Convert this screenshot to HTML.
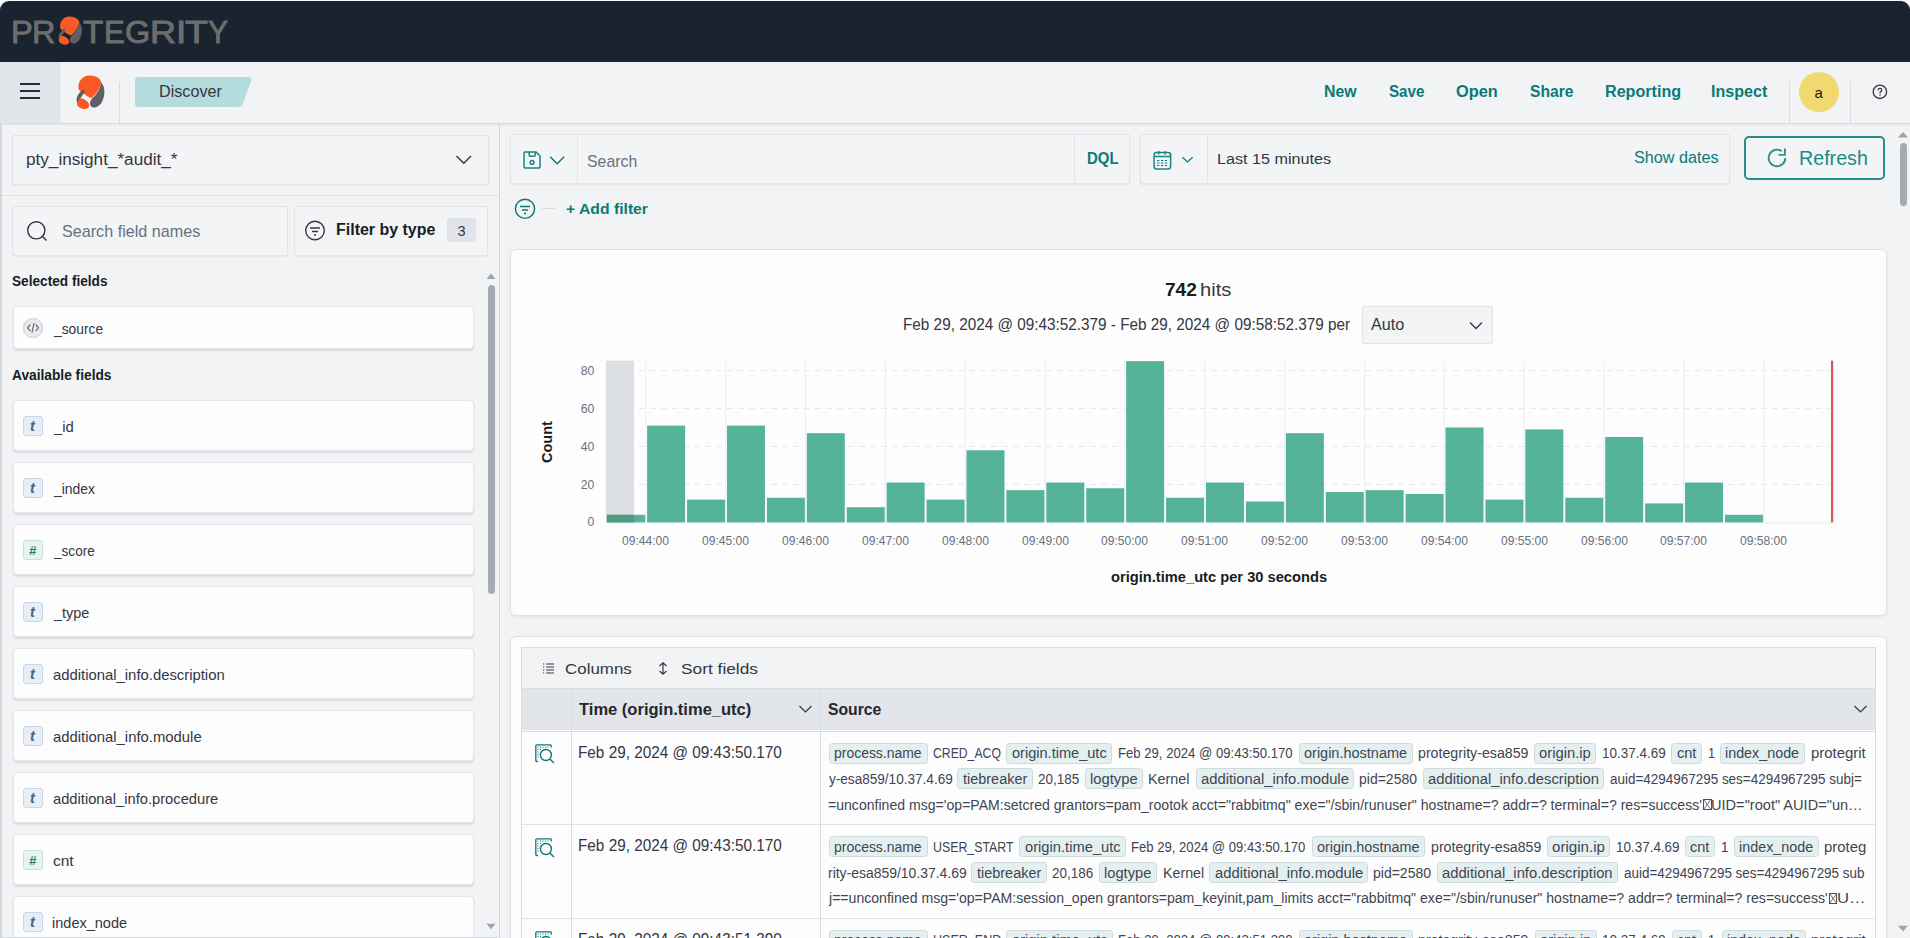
<!DOCTYPE html><html><head><meta charset="utf-8"><style>
html,body{margin:0;padding:0;width:1910px;height:938px;overflow:hidden;background:#f1f3f5}
body{position:relative;font-family:"Liberation Sans",sans-serif}
.t{position:absolute;white-space:pre;transform-origin:0 0;font-family:"Liberation Sans",sans-serif}
svg{overflow:visible}
</style></head><body>
<div style="position:absolute;left:0px;top:0px;width:1910px;height:938px;background:#f1f3f5"></div>
<div style="position:absolute;left:0px;top:0px;width:1910px;height:62px;background:#f7f8f9"></div>
<div style="position:absolute;left:0px;top:1.2px;width:1910px;height:60.8px;background:#1a2430;border-radius:9px 9px 0 0"></div>
<div class="t" style="left:10.72px;top:16.68px;font-size:31.8px;line-height:31.8px;color:#6e6d6e;font-weight:normal;font-style:normal;transform:scaleX(1.0266);-webkit-text-stroke:0.9px #6e6d6e;">P</div>
<div class="t" style="left:32.14px;top:16.68px;font-size:31.8px;line-height:31.8px;color:#6e6d6e;font-weight:normal;font-style:normal;transform:scaleX(1.0217);-webkit-text-stroke:0.9px #6e6d6e;">R</div>
<div class="t" style="left:83.07px;top:16.68px;font-size:31.8px;line-height:31.8px;color:#6e6d6e;font-weight:normal;font-style:normal;transform:scaleX(1.0390);-webkit-text-stroke:0.9px #6e6d6e;">T</div>
<div class="t" style="left:104.16px;top:16.68px;font-size:31.8px;line-height:31.8px;color:#6e6d6e;font-weight:normal;font-style:normal;transform:scaleX(0.9729);-webkit-text-stroke:0.9px #6e6d6e;">E</div>
<div class="t" style="left:124.78px;top:16.68px;font-size:31.8px;line-height:31.8px;color:#6e6d6e;font-weight:normal;font-style:normal;transform:scaleX(1.0194);-webkit-text-stroke:0.9px #6e6d6e;">G</div>
<div class="t" style="left:149.85px;top:16.68px;font-size:31.8px;line-height:31.8px;color:#6e6d6e;font-weight:normal;font-style:normal;transform:scaleX(1.1329);-webkit-text-stroke:0.9px #6e6d6e;">R</div>
<div class="t" style="left:175.67px;top:16.68px;font-size:31.8px;line-height:31.8px;color:#6e6d6e;font-weight:normal;font-style:normal;transform:scaleX(1.1709);-webkit-text-stroke:0.9px #6e6d6e;">I</div>
<div class="t" style="left:185.27px;top:16.68px;font-size:31.8px;line-height:31.8px;color:#6e6d6e;font-weight:normal;font-style:normal;transform:scaleX(1.1834);-webkit-text-stroke:0.9px #6e6d6e;">T</div>
<div class="t" style="left:207.54px;top:16.68px;font-size:31.8px;line-height:31.8px;color:#6e6d6e;font-weight:normal;font-style:normal;transform:scaleX(0.9389);-webkit-text-stroke:0.9px #6e6d6e;">Y</div>
<svg style="position:absolute;left:53.3px;top:12.1px" width="34" height="38" viewBox="0 0 34 38"><g transform="scale(0.84)"><path fill="#f95a24" d="M8.6 19C7.5 11 13 5.5 19.5 5.5C26 5.5 31.5 9 31.3 13C29.5 19.5 25.5 24.5 21.5 28C19 27.5 16.5 25.5 14.2 24C12.5 22.8 10 21.5 8.6 19Z"/><path fill="#5f6064" d="M31.3 12.5C35.5 17 35.5 27 31 33.5C28.5 36.8 25 38 22.5 37.3C20.5 36.5 19.5 34.5 20 32.5C20.5 30.5 21.5 29 22.5 28C26.5 24.5 30 19 31.3 12.5Z"/><path fill="#5f6064" d="M12.6 19.8C14.2 19.2 15.3 21 14.4 22.5C12 25.5 9.5 29.5 8 34C6.3 32.5 6 29 7.5 26C9 23.5 10.8 21 12.6 19.8Z"/><path fill="#f95a24" d="M10.8 28.3C13.5 28.5 17.5 30.8 19 34C19.8 37 17.5 39.2 14.5 39.1C10.5 38.8 7 36.5 7 34C7.5 31 9 28.5 10.8 28.3Z"/></g></svg>
<div style="position:absolute;left:0px;top:62px;width:1910px;height:61px;background:#f1f3f5"></div>
<div style="position:absolute;left:0px;top:123px;width:1910px;height:1px;background:#d6dbe0"></div>
<div style="position:absolute;left:0px;top:124px;width:1910px;height:2px;background:linear-gradient(#e3e6ea,#f1f3f5)"></div>
<div style="position:absolute;left:0px;top:62px;width:60px;height:61px;background:#e1e4e8;border-right:1px solid #e9ecef"></div>
<div style="position:absolute;left:20px;top:83px;width:20px;height:2.2px;background:#1f2e3e"></div>
<div style="position:absolute;left:20px;top:90px;width:20px;height:2.2px;background:#1f2e3e"></div>
<div style="position:absolute;left:20px;top:97px;width:20px;height:2.2px;background:#1f2e3e"></div>
<svg style="position:absolute;left:70px;top:70px" width="41" height="46" viewBox="0 0 41 46"><g transform="scale(1.0)"><path fill="#f95a24" d="M8.6 19C7.5 11 13 5.5 19.5 5.5C26 5.5 31.5 9 31.3 13C29.5 19.5 25.5 24.5 21.5 28C19 27.5 16.5 25.5 14.2 24C12.5 22.8 10 21.5 8.6 19Z"/><path fill="#5f6064" d="M31.3 12.5C35.5 17 35.5 27 31 33.5C28.5 36.8 25 38 22.5 37.3C20.5 36.5 19.5 34.5 20 32.5C20.5 30.5 21.5 29 22.5 28C26.5 24.5 30 19 31.3 12.5Z"/><path fill="#5f6064" d="M12.6 19.8C14.2 19.2 15.3 21 14.4 22.5C12 25.5 9.5 29.5 8 34C6.3 32.5 6 29 7.5 26C9 23.5 10.8 21 12.6 19.8Z"/><path fill="#f95a24" d="M10.8 28.3C13.5 28.5 17.5 30.8 19 34C19.8 37 17.5 39.2 14.5 39.1C10.5 38.8 7 36.5 7 34C7.5 31 9 28.5 10.8 28.3Z"/></g></svg>
<div style="position:absolute;left:119px;top:82px;width:1px;height:41px;background:#d9dde2"></div>
<svg style="position:absolute;left:135px;top:77px" width="117" height="31" viewBox="0 0 117 31"><path fill="#b4dcdc" d="M3 0H114C116 0 117 1.5 116.3 3.5L107.5 27.5C106.8 29.3 105.5 30 103.5 30H3C1.3 30 0 28.7 0 27V3C0 1.3 1.3 0 3 0Z"/></svg>
<div class="t" style="left:159.37px;top:82.93px;font-size:16.5px;line-height:16.5px;color:#343741;font-weight:normal;font-style:normal;transform:scaleX(0.9797);">Discover</div>
<div class="t" style="left:1323.66px;top:84.26px;font-size:16px;line-height:16px;color:#0b7a75;font-weight:bold;font-style:normal;transform:scaleX(0.9883);">New</div>
<div class="t" style="left:1389.38px;top:84.26px;font-size:16px;line-height:16px;color:#0b7a75;font-weight:bold;font-style:normal;transform:scaleX(0.9486);">Save</div>
<div class="t" style="left:1456.33px;top:84.26px;font-size:16px;line-height:16px;color:#0b7a75;font-weight:bold;font-style:normal;transform:scaleX(1.0192);">Open</div>
<div class="t" style="left:1529.56px;top:84.26px;font-size:16px;line-height:16px;color:#0b7a75;font-weight:bold;font-style:normal;transform:scaleX(0.9776);">Share</div>
<div class="t" style="left:1604.94px;top:84.26px;font-size:16px;line-height:16px;color:#0b7a75;font-weight:bold;font-style:normal;transform:scaleX(1.0078);">Reporting</div>
<div class="t" style="left:1710.94px;top:84.26px;font-size:16px;line-height:16px;color:#0b7a75;font-weight:bold;font-style:normal;transform:scaleX(1.0042);">Inspect</div>
<div style="position:absolute;left:1788.5px;top:82px;width:1px;height:41px;background:#d9dde2"></div>
<div style="position:absolute;left:1849.5px;top:82px;width:1px;height:41px;background:#d9dde2"></div>
<div style="position:absolute;left:1799px;top:72px;width:40px;height:40px;background:#f1d86f;border-radius:50%"></div>
<div class="t" style="left:1814.51px;top:85.20px;font-size:15px;line-height:15px;color:#1a1c21;font-weight:normal;font-style:normal;">a</div>
<svg style="position:absolute;left:1871px;top:83px" width="18" height="18" viewBox="0 0 18 18"><circle cx="8.9" cy="8.8" r="6.7" fill="none" stroke="#343741" stroke-width="1.3"/><path d="M7.1 7.3C7.1 6.2 7.9 5.4 8.95 5.4C10.05 5.4 10.8 6.2 10.8 7.1C10.8 8.2 9.5 8.5 9.05 9.4V10.2" fill="none" stroke="#343741" stroke-width="1.25"/><circle cx="9.05" cy="12" r="0.8" fill="#343741"/></svg>
<div style="position:absolute;left:0px;top:124px;width:1.5px;height:814px;background:#d3d7dc"></div>
<div style="position:absolute;left:498.6px;top:124px;width:1.2px;height:814px;background:#d3d7dc"></div>
<div style="position:absolute;left:1.5px;top:195px;width:497px;height:1px;background:#dfe2e6"></div>
<div style="position:absolute;left:12px;top:135px;width:476.5px;height:49.5px;background:#f2f4f6;border:1px solid #e1e5e9;box-sizing:border-box;border-radius:2px;box-shadow:0 1px 1px rgba(0,0,0,.05)"></div>
<div class="t" style="left:25.97px;top:152.03px;font-size:15.8px;line-height:15.8px;color:#343741;font-weight:normal;font-style:normal;transform:scaleX(1.0846);">pty_insight_*audit_*</div>
<svg style="position:absolute;left:455px;top:154px" width="18" height="12" viewBox="0 0 18 12"><path d="M1.5 2L8.8 9.3L16 2" fill="none" stroke="#343741" stroke-width="1.4"/></svg>
<div style="position:absolute;left:12px;top:206px;width:276px;height:50px;background:#f2f4f6;border:1px solid #e1e5e9;box-sizing:border-box;border-radius:2px;box-shadow:0 1px 1px rgba(0,0,0,.05)"></div>
<svg style="position:absolute;left:26px;top:220px" width="24" height="24" viewBox="0 0 24 24"><circle cx="10.3" cy="10.3" r="8.6" fill="none" stroke="#343741" stroke-width="1.4"/><path d="M16.3 16.3L20.5 20.5" stroke="#343741" stroke-width="1.5"/></svg>
<div class="t" style="left:62.27px;top:223.29px;font-size:16.2px;line-height:16.2px;color:#69707d;font-weight:normal;font-style:normal;transform:scaleX(0.9974);">Search field names</div>
<div style="position:absolute;left:294px;top:206px;width:194px;height:50px;background:#f2f4f6;border:1px solid #e1e5e9;box-sizing:border-box;border-radius:2px;box-shadow:0 1px 1px rgba(0,0,0,.05)"></div>
<svg style="position:absolute;left:303px;top:219px" width="24" height="24" viewBox="0 0 24 24"><circle cx="12" cy="11.5" r="9.3" fill="none" stroke="#343741" stroke-width="1.4"/><path d="M7 9H17M9 12.5H15M11 16H13" stroke="#343741" stroke-width="1.4"/></svg>
<div class="t" style="left:335.95px;top:222.46px;font-size:16px;line-height:16px;color:#1a1c21;font-weight:bold;font-style:normal;transform:scaleX(0.9981);">Filter by type</div>
<div style="position:absolute;left:447px;top:218.4px;width:29px;height:24px;background:#e0e3e7;border-radius:3px"></div>
<div class="t" style="left:457.51px;top:223.73px;font-size:14.5px;line-height:14.5px;color:#343741;font-weight:normal;font-style:normal;">3</div>
<div class="t" style="left:12.02px;top:273.73px;font-size:14.5px;line-height:14.5px;color:#1a1c21;font-weight:bold;font-style:normal;transform:scaleX(0.9408);">Selected fields</div>
<div class="t" style="left:12.07px;top:367.63px;font-size:14.5px;line-height:14.5px;color:#1a1c21;font-weight:bold;font-style:normal;transform:scaleX(0.9471);">Available fields</div>
<div style="position:absolute;left:12.6px;top:305.9px;width:461.8px;height:43.2px;background:#fdfdfe;border:1px solid #e4e7eb;box-sizing:border-box;border-radius:4px;box-shadow:0 1.5px 2px rgba(60,66,80,.12)"></div>
<div style="position:absolute;left:23.2px;top:318.2px;width:19.5px;height:19.5px;background:#e9ebee;border:1px solid #c9cdd3;box-sizing:border-box;border-radius:50%"></div>
<svg style="position:absolute;left:23.2px;top:318.2px" width="20" height="20" viewBox="0 0 20 20"><path d="M7.3 6.5L4.6 9.8L7.3 13.1M12.7 6.5L15.4 9.8L12.7 13.1M11 5.2L9 14.6" fill="none" stroke="#69707d" stroke-width="1.3"/></svg>
<div class="t" style="left:53.52px;top:320.50px;font-size:15.0px;line-height:15.0px;color:#343741;font-weight:normal;font-style:normal;transform:scaleX(0.9200);">_source</div>
<div style="position:absolute;left:12.6px;top:400.3px;width:461.8px;height:51px;background:#fdfdfe;border:1px solid #e4e7eb;box-sizing:border-box;border-radius:4px;box-shadow:0 1.5px 2px rgba(60,66,80,.12)"></div>
<div style="position:absolute;left:23px;top:416.40000000000003px;width:19.7px;height:19.4px;background:#e6eff7;border:1px solid #c6d6e6;box-sizing:border-box;border-radius:3px"></div>
<div class="t" style="left:29.93px;top:418.73px;font-size:14.5px;line-height:14.5px;color:#4a6382;font-weight:bold;font-style:italic;">t</div>
<div class="t" style="left:53.54px;top:418.60px;font-size:15.0px;line-height:15.0px;color:#343741;font-weight:normal;font-style:normal;transform:scaleX(0.9902);">_id</div>
<div style="position:absolute;left:12.6px;top:462.3px;width:461.8px;height:51px;background:#fdfdfe;border:1px solid #e4e7eb;box-sizing:border-box;border-radius:4px;box-shadow:0 1.5px 2px rgba(60,66,80,.12)"></div>
<div style="position:absolute;left:23px;top:478.40000000000003px;width:19.7px;height:19.4px;background:#e6eff7;border:1px solid #c6d6e6;box-sizing:border-box;border-radius:3px"></div>
<div class="t" style="left:29.93px;top:480.73px;font-size:14.5px;line-height:14.5px;color:#4a6382;font-weight:bold;font-style:italic;">t</div>
<div class="t" style="left:53.52px;top:480.60px;font-size:15.0px;line-height:15.0px;color:#343741;font-weight:normal;font-style:normal;transform:scaleX(0.9279);">_index</div>
<div style="position:absolute;left:12.6px;top:524.3px;width:461.8px;height:51px;background:#fdfdfe;border:1px solid #e4e7eb;box-sizing:border-box;border-radius:4px;box-shadow:0 1.5px 2px rgba(60,66,80,.12)"></div>
<div style="position:absolute;left:23px;top:540.4px;width:19.7px;height:19.4px;background:#e4f4ee;border:1px solid #c4e2d6;box-sizing:border-box;border-radius:3px"></div>
<div class="t" style="left:29.09px;top:543.60px;font-size:13px;line-height:13px;color:#387765;font-weight:bold;font-style:italic;">#</div>
<div class="t" style="left:53.52px;top:542.60px;font-size:15.0px;line-height:15.0px;color:#343741;font-weight:normal;font-style:normal;transform:scaleX(0.9059);">_score</div>
<div style="position:absolute;left:12.6px;top:586.3px;width:461.8px;height:51px;background:#fdfdfe;border:1px solid #e4e7eb;box-sizing:border-box;border-radius:4px;box-shadow:0 1.5px 2px rgba(60,66,80,.12)"></div>
<div style="position:absolute;left:23px;top:602.4px;width:19.7px;height:19.4px;background:#e6eff7;border:1px solid #c6d6e6;box-sizing:border-box;border-radius:3px"></div>
<div class="t" style="left:29.93px;top:604.73px;font-size:14.5px;line-height:14.5px;color:#4a6382;font-weight:bold;font-style:italic;">t</div>
<div class="t" style="left:53.53px;top:604.60px;font-size:15.0px;line-height:15.0px;color:#343741;font-weight:normal;font-style:normal;transform:scaleX(0.9650);">_type</div>
<div style="position:absolute;left:12.6px;top:648.3px;width:461.8px;height:51px;background:#fdfdfe;border:1px solid #e4e7eb;box-sizing:border-box;border-radius:4px;box-shadow:0 1.5px 2px rgba(60,66,80,.12)"></div>
<div style="position:absolute;left:23px;top:664.4px;width:19.7px;height:19.4px;background:#e6eff7;border:1px solid #c6d6e6;box-sizing:border-box;border-radius:3px"></div>
<div class="t" style="left:29.93px;top:666.73px;font-size:14.5px;line-height:14.5px;color:#4a6382;font-weight:bold;font-style:italic;">t</div>
<div class="t" style="left:52.68px;top:666.60px;font-size:15.0px;line-height:15.0px;color:#343741;font-weight:normal;font-style:normal;transform:scaleX(0.9898);">additional_info.description</div>
<div style="position:absolute;left:12.6px;top:710.3px;width:461.8px;height:51px;background:#fdfdfe;border:1px solid #e4e7eb;box-sizing:border-box;border-radius:4px;box-shadow:0 1.5px 2px rgba(60,66,80,.12)"></div>
<div style="position:absolute;left:23px;top:726.4px;width:19.7px;height:19.4px;background:#e6eff7;border:1px solid #c6d6e6;box-sizing:border-box;border-radius:3px"></div>
<div class="t" style="left:29.93px;top:728.73px;font-size:14.5px;line-height:14.5px;color:#4a6382;font-weight:bold;font-style:italic;">t</div>
<div class="t" style="left:52.68px;top:728.60px;font-size:15.0px;line-height:15.0px;color:#343741;font-weight:normal;font-style:normal;transform:scaleX(0.9905);">additional_info.module</div>
<div style="position:absolute;left:12.6px;top:772.3px;width:461.8px;height:51px;background:#fdfdfe;border:1px solid #e4e7eb;box-sizing:border-box;border-radius:4px;box-shadow:0 1.5px 2px rgba(60,66,80,.12)"></div>
<div style="position:absolute;left:23px;top:788.4px;width:19.7px;height:19.4px;background:#e6eff7;border:1px solid #c6d6e6;box-sizing:border-box;border-radius:3px"></div>
<div class="t" style="left:29.93px;top:790.73px;font-size:14.5px;line-height:14.5px;color:#4a6382;font-weight:bold;font-style:italic;">t</div>
<div class="t" style="left:52.68px;top:790.60px;font-size:15.0px;line-height:15.0px;color:#343741;font-weight:normal;font-style:normal;transform:scaleX(0.9811);">additional_info.procedure</div>
<div style="position:absolute;left:12.6px;top:834.3px;width:461.8px;height:51px;background:#fdfdfe;border:1px solid #e4e7eb;box-sizing:border-box;border-radius:4px;box-shadow:0 1.5px 2px rgba(60,66,80,.12)"></div>
<div style="position:absolute;left:23px;top:850.4px;width:19.7px;height:19.4px;background:#e4f4ee;border:1px solid #c4e2d6;box-sizing:border-box;border-radius:3px"></div>
<div class="t" style="left:29.09px;top:853.60px;font-size:13px;line-height:13px;color:#387765;font-weight:bold;font-style:italic;">#</div>
<div class="t" style="left:52.65px;top:852.60px;font-size:15.0px;line-height:15.0px;color:#343741;font-weight:normal;font-style:normal;transform:scaleX(1.0324);">cnt</div>
<div style="position:absolute;left:12.6px;top:896.3px;width:461.8px;height:51px;background:#fdfdfe;border:1px solid #e4e7eb;box-sizing:border-box;border-radius:4px;box-shadow:0 1.5px 2px rgba(60,66,80,.12)"></div>
<div style="position:absolute;left:23px;top:912.4px;width:19.7px;height:19.4px;background:#e6eff7;border:1px solid #c6d6e6;box-sizing:border-box;border-radius:3px"></div>
<div class="t" style="left:29.93px;top:914.73px;font-size:14.5px;line-height:14.5px;color:#4a6382;font-weight:bold;font-style:italic;">t</div>
<div class="t" style="left:52.34px;top:914.60px;font-size:15.0px;line-height:15.0px;color:#343741;font-weight:normal;font-style:normal;transform:scaleX(0.9682);">index_node</div>
<svg style="position:absolute;left:486px;top:273px" width="10" height="7" viewBox="0 0 10 7"><path d="M0.5 6L5 0.5L9.5 6Z" fill="#9ea3a9"/></svg>
<div style="position:absolute;left:488.2px;top:285px;width:6.8px;height:309px;background:#a5abb3;border-radius:4px"></div>
<svg style="position:absolute;left:486px;top:923px" width="10" height="7" viewBox="0 0 10 7"><path d="M0.5 0.8L5 6.3L9.5 0.8Z" fill="#9ea3a9"/></svg>
<div style="position:absolute;left:510px;top:134px;width:619.5px;height:49.6px;background:#f2f4f6;border:1px solid #e1e5e9;box-sizing:border-box;border-radius:2px;box-shadow:0 1px 2px rgba(0,0,0,.06)"></div>
<div style="position:absolute;left:577px;top:135.5px;width:1px;height:47px;background:#e1e5e9"></div>
<div style="position:absolute;left:1074px;top:135.5px;width:1px;height:47px;background:#e1e5e9"></div>
<svg style="position:absolute;left:521px;top:150px" width="22" height="21" viewBox="0 0 22 21"><path d="M3.8 1.95H15L19.05 6V16.6A1.5 1.5 0 0 1 17.55 18.05H4.55A1.5 1.5 0 0 1 3.05 16.6V2.7A0.75 0.75 0 0 1 3.8 1.95Z" fill="none" stroke="#1b8580" stroke-width="1.5"/><path d="M8.2 1.95V5.3A1 1 0 0 0 9.2 6.3H13.2A1 1 0 0 0 14.2 5.3V1.95" fill="none" stroke="#1b8580" stroke-width="1.5"/><circle cx="11.1" cy="12.4" r="1.9" fill="none" stroke="#1b8580" stroke-width="1.4"/></svg>
<svg style="position:absolute;left:549px;top:154.8px" width="17" height="11" viewBox="0 0 17 11"><path d="M1.2 1.8L8.2 8.8L15.2 1.8" fill="none" stroke="#0b7a75" stroke-width="1.5"/></svg>
<div class="t" style="left:587.29px;top:153.29px;font-size:16.2px;line-height:16.2px;color:#69707d;font-weight:normal;font-style:normal;transform:scaleX(0.9787);">Search</div>
<div class="t" style="left:1086.71px;top:151.23px;font-size:15.8px;line-height:15.8px;color:#0b7a75;font-weight:bold;font-style:normal;transform:scaleX(0.9454);">DQL</div>
<div style="position:absolute;left:1140px;top:134px;width:589.6px;height:49.6px;background:#f2f4f6;border:1px solid #e1e5e9;box-sizing:border-box;border-radius:2px;box-shadow:0 1px 2px rgba(0,0,0,.06)"></div>
<div style="position:absolute;left:1207px;top:135.5px;width:1px;height:47px;background:#e1e5e9"></div>
<svg style="position:absolute;left:1151px;top:149px" width="22" height="23" viewBox="0 0 22 23"><rect x="3.05" y="3.6" width="16.6" height="16.3" rx="2.6" fill="none" stroke="#1b8580" stroke-width="1.5"/><path d="M3.05 7.4H19.65M7.6 2V5.4M14 2V5.4" stroke="#1b8580" stroke-width="1.5"/><path d="M6.1 11h2.3v1.1h-2.3zM10 11h2.3v1.1h-2.3zM13.8 11h2.3v1.1h-2.3zM6.1 13.5h2.3v1.1h-2.3zM10 13.5h2.3v1.1h-2.3zM13.8 13.5h2.3v1.1h-2.3zM6.1 15.9h2.3v1.1h-2.3zM10 15.9h2.3v1.1h-2.3zM13.8 15.9h2.3v1.1h-2.3z" fill="#0b7a75"/></svg>
<svg style="position:absolute;left:1180.5px;top:154px" width="14" height="10" viewBox="0 0 14 10"><path d="M1.3 3.2L6.5 8L11.7 3.2" fill="none" stroke="#0b7a75" stroke-width="1.2"/></svg>
<div class="t" style="left:1217.47px;top:150.85px;font-size:15.3px;line-height:15.3px;color:#343741;font-weight:normal;font-style:normal;transform:scaleX(1.0564);">Last 15 minutes</div>
<div class="t" style="left:1634.27px;top:150.46px;font-size:16px;line-height:16px;color:#0b7a75;font-weight:normal;font-style:normal;transform:scaleX(1.0107);">Show dates</div>
<div style="position:absolute;left:1744px;top:136px;width:141.4px;height:44px;border:2px solid #2a8f88;box-sizing:border-box;border-radius:5px;background:#f2f4f6"></div>
<svg style="position:absolute;left:1766px;top:147px" width="22" height="22" viewBox="0 0 22 22"><path d="M15.7 4.1A8.3 8.3 0 1 0 19.3 10.9" fill="none" stroke="#2f9189" stroke-width="1.9"/><path d="M18.9 1.6V7.9H12.5" fill="none" stroke="#2f9189" stroke-width="1.9"/></svg>
<div class="t" style="left:1799.39px;top:148.20px;font-size:20.2px;line-height:20.2px;color:#1a8a83;font-weight:normal;font-style:normal;transform:scaleX(0.9739);">Refresh</div>
<svg style="position:absolute;left:1897px;top:131px" width="12" height="7" viewBox="0 0 12 7"><path d="M1 6.5L6 1L11 6.5Z" fill="#9ea3a9"/></svg>
<div style="position:absolute;left:1900px;top:143px;width:7px;height:62.5px;background:#a5abb3;border-radius:4px"></div>
<svg style="position:absolute;left:1897px;top:925px" width="12" height="7" viewBox="0 0 12 7"><path d="M1 0.8L6 6.3L11 0.8Z" fill="#9ea3a9"/></svg>
<svg style="position:absolute;left:514px;top:198px" width="22" height="22" viewBox="0 0 22 22"><circle cx="11" cy="10.8" r="9.6" fill="none" stroke="#0b7a75" stroke-width="1.4"/><path d="M6 8.5H16M8 12H14M10 15.5H12" stroke="#0b7a75" stroke-width="1.4"/></svg>
<div style="position:absolute;left:542px;top:207.8px;width:13px;height:1.2px;background:#d9dde2"></div>
<div class="t" style="left:565.94px;top:201.38px;font-size:15.5px;line-height:15.5px;color:#0b7a75;font-weight:bold;font-style:normal;transform:scaleX(1.0146);">+ Add filter</div>
<div style="position:absolute;left:510px;top:249px;width:1376.6px;height:366.8px;background:#fdfdfe;border:1px solid #dde1e6;box-sizing:border-box;border-radius:6px;box-shadow:0 1px 3px rgba(0,0,0,.07)"></div>
<div class="t" style="left:1165.20px;top:279.92px;font-size:19px;line-height:19px;color:#1a1c21;font-weight:bold;font-style:normal;transform:scaleX(1.0049);">742</div>
<div class="t" style="left:1200.41px;top:279.92px;font-size:19px;line-height:19px;color:#343741;font-weight:normal;font-style:normal;transform:scaleX(1.0592);">hits</div>
<div class="t" style="left:902.95px;top:317.16px;font-size:16px;line-height:16px;color:#343741;font-weight:normal;font-style:normal;transform:scaleX(0.9564);">Feb 29, 2024 @ 09:43:52.379 - Feb 29, 2024 @ 09:58:52.379 per</div>
<div style="position:absolute;left:1361.5px;top:305.5px;width:131.9px;height:38.7px;background:#f2f4f6;border:1px solid #dfe3e8;box-sizing:border-box;border-radius:2px"></div>
<div class="t" style="left:1371.37px;top:317.46px;font-size:16px;line-height:16px;color:#343741;font-weight:normal;font-style:normal;transform:scaleX(1.0117);">Auto</div>
<svg style="position:absolute;left:1468px;top:320px" width="16" height="11" viewBox="0 0 16 11"><path d="M2 2.5L8 8.5L14 2.5" fill="none" stroke="#343741" stroke-width="1.3"/></svg>
<svg style="position:absolute;left:520px;top:350px" width="1360" height="250" viewBox="0 0 1360 250"><line x1="125.90" y1="10.699999999999989" x2="125.90" y2="172.39999999999998" stroke="#ebedf0" stroke-width="1"/><line x1="205.74" y1="10.699999999999989" x2="205.74" y2="172.39999999999998" stroke="#ebedf0" stroke-width="1"/><line x1="285.58" y1="10.699999999999989" x2="285.58" y2="172.39999999999998" stroke="#ebedf0" stroke-width="1"/><line x1="365.42" y1="10.699999999999989" x2="365.42" y2="172.39999999999998" stroke="#ebedf0" stroke-width="1"/><line x1="445.26" y1="10.699999999999989" x2="445.26" y2="172.39999999999998" stroke="#ebedf0" stroke-width="1"/><line x1="525.10" y1="10.699999999999989" x2="525.10" y2="172.39999999999998" stroke="#ebedf0" stroke-width="1"/><line x1="604.94" y1="10.699999999999989" x2="604.94" y2="172.39999999999998" stroke="#ebedf0" stroke-width="1"/><line x1="684.78" y1="10.699999999999989" x2="684.78" y2="172.39999999999998" stroke="#ebedf0" stroke-width="1"/><line x1="764.62" y1="10.699999999999989" x2="764.62" y2="172.39999999999998" stroke="#ebedf0" stroke-width="1"/><line x1="844.46" y1="10.699999999999989" x2="844.46" y2="172.39999999999998" stroke="#ebedf0" stroke-width="1"/><line x1="924.30" y1="10.699999999999989" x2="924.30" y2="172.39999999999998" stroke="#ebedf0" stroke-width="1"/><line x1="1004.14" y1="10.699999999999989" x2="1004.14" y2="172.39999999999998" stroke="#ebedf0" stroke-width="1"/><line x1="1083.98" y1="10.699999999999989" x2="1083.98" y2="172.39999999999998" stroke="#ebedf0" stroke-width="1"/><line x1="1163.82" y1="10.699999999999989" x2="1163.82" y2="172.39999999999998" stroke="#ebedf0" stroke-width="1"/><line x1="1243.66" y1="10.699999999999989" x2="1243.66" y2="172.39999999999998" stroke="#ebedf0" stroke-width="1"/><line x1="86" y1="134.45" x2="1312" y2="134.45" stroke="#e6e9ec" stroke-width="1" stroke-dasharray="6 5"/><line x1="86" y1="96.50" x2="1312" y2="96.50" stroke="#e6e9ec" stroke-width="1" stroke-dasharray="6 5"/><line x1="86" y1="58.55" x2="1312" y2="58.55" stroke="#e6e9ec" stroke-width="1" stroke-dasharray="6 5"/><line x1="86" y1="20.60" x2="1312" y2="20.60" stroke="#e6e9ec" stroke-width="1" stroke-dasharray="6 5"/><line x1="86" y1="172.89999999999998" x2="1312" y2="172.89999999999998" stroke="#eceef1" stroke-width="1"/><rect x="86" y="10.699999999999989" width="28" height="161.7" fill="#dcdfe3"/><rect x="87.20" y="164.81" width="38" height="7.59" fill="#54b399"/><rect x="127.12" y="75.63" width="38" height="96.77" fill="#54b399"/><rect x="167.04" y="149.63" width="38" height="22.77" fill="#54b399"/><rect x="206.96" y="75.63" width="38" height="96.77" fill="#54b399"/><rect x="246.88" y="147.73" width="38" height="24.67" fill="#54b399"/><rect x="286.80" y="83.22" width="38" height="89.18" fill="#54b399"/><rect x="326.72" y="157.22" width="38" height="15.18" fill="#54b399"/><rect x="366.64" y="132.55" width="38" height="39.85" fill="#54b399"/><rect x="406.56" y="149.63" width="38" height="22.77" fill="#54b399"/><rect x="446.48" y="100.29" width="38" height="72.11" fill="#54b399"/><rect x="486.40" y="140.14" width="38" height="32.26" fill="#54b399"/><rect x="526.32" y="132.55" width="38" height="39.85" fill="#54b399"/><rect x="566.24" y="138.25" width="38" height="34.16" fill="#54b399"/><rect x="606.16" y="11.11" width="38" height="161.29" fill="#54b399"/><rect x="646.08" y="147.73" width="38" height="24.67" fill="#54b399"/><rect x="686.00" y="132.55" width="38" height="39.85" fill="#54b399"/><rect x="725.92" y="151.53" width="38" height="20.87" fill="#54b399"/><rect x="765.84" y="83.22" width="38" height="89.18" fill="#54b399"/><rect x="805.76" y="142.04" width="38" height="30.36" fill="#54b399"/><rect x="845.68" y="140.14" width="38" height="32.26" fill="#54b399"/><rect x="885.60" y="143.94" width="38" height="28.46" fill="#54b399"/><rect x="925.52" y="77.52" width="38" height="94.88" fill="#54b399"/><rect x="965.44" y="149.63" width="38" height="22.77" fill="#54b399"/><rect x="1005.36" y="79.42" width="38" height="92.98" fill="#54b399"/><rect x="1045.28" y="147.73" width="38" height="24.67" fill="#54b399"/><rect x="1085.20" y="87.01" width="38" height="85.39" fill="#54b399"/><rect x="1125.12" y="153.42" width="38" height="18.98" fill="#54b399"/><rect x="1165.04" y="132.55" width="38" height="39.85" fill="#54b399"/><rect x="1204.96" y="164.81" width="38" height="7.59" fill="#54b399"/><rect x="86.79999999999995" y="164.81" width="27.2" height="7.59" fill="#4f9c85"/><rect x="1311" y="10.699999999999989" width="2.2" height="161.7" fill="#d6574f"/></svg>
<div class="t" style="left:587.48px;top:516.47px;font-size:12.2px;line-height:12.2px;color:#69707d;font-weight:normal;font-style:normal;">0</div>
<div class="t" style="left:580.70px;top:478.52px;font-size:12.2px;line-height:12.2px;color:#69707d;font-weight:normal;font-style:normal;">20</div>
<div class="t" style="left:580.70px;top:440.57px;font-size:12.2px;line-height:12.2px;color:#69707d;font-weight:normal;font-style:normal;">40</div>
<div class="t" style="left:580.70px;top:402.62px;font-size:12.2px;line-height:12.2px;color:#69707d;font-weight:normal;font-style:normal;">60</div>
<div class="t" style="left:580.70px;top:364.67px;font-size:12.2px;line-height:12.2px;color:#69707d;font-weight:normal;font-style:normal;">80</div>
<div class="t" style="left:540.00px;top:462.50px;font-size:14.5px;line-height:14.5px;color:#1a1c21;font-weight:bold;transform-origin:0 0;transform:rotate(-90deg)">Count</div>
<div class="t" style="left:622.43px;top:535.26px;font-size:12.8px;line-height:12.8px;color:#69707d;font-weight:normal;font-style:normal;transform:scaleX(0.9420);">09:44:00</div>
<div class="t" style="left:702.27px;top:535.26px;font-size:12.8px;line-height:12.8px;color:#69707d;font-weight:normal;font-style:normal;transform:scaleX(0.9420);">09:45:00</div>
<div class="t" style="left:782.11px;top:535.26px;font-size:12.8px;line-height:12.8px;color:#69707d;font-weight:normal;font-style:normal;transform:scaleX(0.9420);">09:46:00</div>
<div class="t" style="left:861.95px;top:535.26px;font-size:12.8px;line-height:12.8px;color:#69707d;font-weight:normal;font-style:normal;transform:scaleX(0.9420);">09:47:00</div>
<div class="t" style="left:941.79px;top:535.26px;font-size:12.8px;line-height:12.8px;color:#69707d;font-weight:normal;font-style:normal;transform:scaleX(0.9420);">09:48:00</div>
<div class="t" style="left:1021.63px;top:535.26px;font-size:12.8px;line-height:12.8px;color:#69707d;font-weight:normal;font-style:normal;transform:scaleX(0.9420);">09:49:00</div>
<div class="t" style="left:1101.47px;top:535.26px;font-size:12.8px;line-height:12.8px;color:#69707d;font-weight:normal;font-style:normal;transform:scaleX(0.9420);">09:50:00</div>
<div class="t" style="left:1181.31px;top:535.26px;font-size:12.8px;line-height:12.8px;color:#69707d;font-weight:normal;font-style:normal;transform:scaleX(0.9420);">09:51:00</div>
<div class="t" style="left:1261.15px;top:535.26px;font-size:12.8px;line-height:12.8px;color:#69707d;font-weight:normal;font-style:normal;transform:scaleX(0.9420);">09:52:00</div>
<div class="t" style="left:1340.99px;top:535.26px;font-size:12.8px;line-height:12.8px;color:#69707d;font-weight:normal;font-style:normal;transform:scaleX(0.9420);">09:53:00</div>
<div class="t" style="left:1420.83px;top:535.26px;font-size:12.8px;line-height:12.8px;color:#69707d;font-weight:normal;font-style:normal;transform:scaleX(0.9420);">09:54:00</div>
<div class="t" style="left:1500.67px;top:535.26px;font-size:12.8px;line-height:12.8px;color:#69707d;font-weight:normal;font-style:normal;transform:scaleX(0.9420);">09:55:00</div>
<div class="t" style="left:1580.51px;top:535.26px;font-size:12.8px;line-height:12.8px;color:#69707d;font-weight:normal;font-style:normal;transform:scaleX(0.9420);">09:56:00</div>
<div class="t" style="left:1660.35px;top:535.26px;font-size:12.8px;line-height:12.8px;color:#69707d;font-weight:normal;font-style:normal;transform:scaleX(0.9420);">09:57:00</div>
<div class="t" style="left:1740.19px;top:535.26px;font-size:12.8px;line-height:12.8px;color:#69707d;font-weight:normal;font-style:normal;transform:scaleX(0.9420);">09:58:00</div>
<div class="t" style="left:1111.43px;top:569.53px;font-size:14.5px;line-height:14.5px;color:#1a1c21;font-weight:bold;font-style:normal;transform:scaleX(1.0119);">origin.time_utc per 30 seconds</div>
<div style="position:absolute;left:510px;top:636px;width:1376.6px;height:320px;background:#fdfdfe;border:1px solid #dde1e6;box-sizing:border-box;border-radius:6px;box-shadow:0 1px 3px rgba(0,0,0,.07)"></div>
<div style="position:absolute;left:521px;top:647px;width:1355px;height:300px;background:#fdfdfe;border:1px solid #d9dde2;box-sizing:border-box"></div>
<div style="position:absolute;left:522px;top:648px;width:1353px;height:40px;background:#f1f3f5"></div>
<div style="position:absolute;left:522px;top:688.3px;width:1353px;height:42.2px;background:#e2e5e9"></div>
<div style="position:absolute;left:522px;top:688px;width:1353px;height:1px;background:#d9dde2"></div>
<div style="position:absolute;left:522px;top:730.5px;width:1353px;height:1px;background:#d9dde2"></div>
<div style="position:absolute;left:570.5px;top:688.3px;width:1px;height:250px;background:#d9dde2"></div>
<div style="position:absolute;left:820.3px;top:688.3px;width:1px;height:250px;background:#d9dde2"></div>
<div style="position:absolute;left:522px;top:824.3px;width:1353px;height:1px;background:#dfe2e6"></div>
<div style="position:absolute;left:522px;top:918.3px;width:1353px;height:1px;background:#dfe2e6"></div>
<svg style="position:absolute;left:541px;top:661px" width="16" height="15" viewBox="0 0 16 15"><path d="M2 3H3.2M2 6H3.2M2 9H3.2M2 12H3.2M5.2 3H13M5.2 6H13M5.2 9H13M5.2 12H13" stroke="#343741" stroke-width="1.2"/></svg>
<div class="t" style="left:565.25px;top:661.40px;font-size:15.0px;line-height:15.0px;color:#343741;font-weight:normal;font-style:normal;transform:scaleX(1.1278);">Columns</div>
<svg style="position:absolute;left:656px;top:661px" width="14" height="15" viewBox="0 0 14 15"><path d="M3.5 5L7 1.8L10.5 5M3.5 10L7 13.2L10.5 10M7 1.8V13.2" fill="none" stroke="#343741" stroke-width="1.2"/></svg>
<div class="t" style="left:681.02px;top:661.40px;font-size:15.0px;line-height:15.0px;color:#343741;font-weight:normal;font-style:normal;transform:scaleX(1.1546);">Sort fields</div>
<div class="t" style="left:579.22px;top:702.26px;font-size:16px;line-height:16px;color:#25282f;font-weight:bold;font-style:normal;transform:scaleX(1.0327);">Time (origin.time_utc)</div>
<svg style="position:absolute;left:798px;top:704px" width="15" height="10" viewBox="0 0 15 10"><path d="M1.5 2L7.5 8L13.5 2" fill="none" stroke="#343741" stroke-width="1.2"/></svg>
<div class="t" style="left:828.26px;top:702.26px;font-size:16px;line-height:16px;color:#25282f;font-weight:bold;font-style:normal;transform:scaleX(0.9822);">Source</div>
<svg style="position:absolute;left:1853px;top:704px" width="15" height="10" viewBox="0 0 15 10"><path d="M1.5 2L7.5 8L13.5 2" fill="none" stroke="#343741" stroke-width="1.2"/></svg>
<svg style="position:absolute;left:535px;top:744px" width="22" height="22" viewBox="0 0 22 22"><path d="M3 17.5H1.8C1.2 17.5 0.8 17.1 0.8 16.5V1.8C0.8 1.2 1.2 0.8 1.8 0.8H15.3C15.9 0.8 16.3 1.2 16.3 1.8V3.5" fill="none" stroke="#0b7a75" stroke-width="1.3"/><circle cx="10.9" cy="11" r="5.5" fill="none" stroke="#0b7a75" stroke-width="1.4"/><path d="M14.9 15L18.9 19" stroke="#0b7a75" stroke-width="1.4"/><rect x="2.5" y="2.6" width="1" height="1" fill="#0b7a75"/><rect x="5.0" y="2.6" width="1" height="1" fill="#0b7a75"/><rect x="7.5" y="2.6" width="1" height="1" fill="#0b7a75"/><rect x="10.0" y="2.6" width="1" height="1" fill="#0b7a75"/><rect x="12.5" y="2.6" width="1" height="1" fill="#0b7a75"/><rect x="2.5" y="5.0" width="1" height="1" fill="#0b7a75"/><rect x="2.5" y="7.5" width="1" height="1" fill="#0b7a75"/><rect x="2.5" y="10.0" width="1" height="1" fill="#0b7a75"/><rect x="2.5" y="12.5" width="1" height="1" fill="#0b7a75"/><rect x="5" y="5" width="1" height="1" fill="#0b7a75"/></svg>
<div class="t" style="left:578.14px;top:744.66px;font-size:16px;line-height:16px;color:#343741;font-weight:normal;font-style:normal;transform:scaleX(0.9572);">Feb 29, 2024 @ 09:43:50.170</div>
<div style="position:absolute;left:829.3px;top:742.5999999999999px;width:98.30000000000007px;height:21px;background:#e4eff0;border:1px solid #cfdadd;box-sizing:border-box;border-radius:3.5px"></div>
<div class="t" style="left:834.41px;top:745.18px;font-size:15.5px;line-height:15.5px;color:#3f4550;font-weight:normal;font-style:normal;transform:scaleX(0.8999);">process.name</div>
<div class="t" style="left:932.79px;top:745.18px;font-size:15.5px;line-height:15.5px;color:#3f4550;font-weight:normal;font-style:normal;transform:scaleX(0.7883);">CRED_ACQ</div>
<div style="position:absolute;left:1006.4px;top:742.5999999999999px;width:105.89999999999998px;height:21px;background:#e4eff0;border:1px solid #cfdadd;box-sizing:border-box;border-radius:3.5px"></div>
<div class="t" style="left:1011.79px;top:745.18px;font-size:15.5px;line-height:15.5px;color:#3f4550;font-weight:normal;font-style:normal;transform:scaleX(0.9394);">origin.time_utc</div>
<div class="t" style="left:1118.22px;top:745.18px;font-size:15.5px;line-height:15.5px;color:#3f4550;font-weight:normal;font-style:normal;transform:scaleX(0.8466);">Feb 29, 2024 @ 09:43:50.170</div>
<div style="position:absolute;left:1298.5px;top:742.5999999999999px;width:114.0px;height:21px;background:#e4eff0;border:1px solid #cfdadd;box-sizing:border-box;border-radius:3.5px"></div>
<div class="t" style="left:1303.89px;top:745.18px;font-size:15.5px;line-height:15.5px;color:#3f4550;font-weight:normal;font-style:normal;transform:scaleX(0.9344);">origin.hostname</div>
<div class="t" style="left:1417.89px;top:745.18px;font-size:15.5px;line-height:15.5px;color:#3f4550;font-weight:normal;font-style:normal;transform:scaleX(0.9159);">protegrity-esa859</div>
<div style="position:absolute;left:1533.7px;top:742.5999999999999px;width:62.799999999999955px;height:21px;background:#e4eff0;border:1px solid #cfdadd;box-sizing:border-box;border-radius:3.5px"></div>
<div class="t" style="left:1539.08px;top:745.18px;font-size:15.5px;line-height:15.5px;color:#3f4550;font-weight:normal;font-style:normal;transform:scaleX(0.9548);">origin.ip</div>
<div class="t" style="left:1601.97px;top:745.18px;font-size:15.5px;line-height:15.5px;color:#3f4550;font-weight:normal;font-style:normal;transform:scaleX(0.8704);">10.37.4.69</div>
<div style="position:absolute;left:1671.4px;top:742.5999999999999px;width:30.899999999999864px;height:21px;background:#e4eff0;border:1px solid #cfdadd;box-sizing:border-box;border-radius:3.5px"></div>
<div class="t" style="left:1676.79px;top:745.18px;font-size:15.5px;line-height:15.5px;color:#3f4550;font-weight:normal;font-style:normal;transform:scaleX(0.9389);">cnt</div>
<div class="t" style="left:1707.63px;top:745.18px;font-size:15.5px;line-height:15.5px;color:#3f4550;font-weight:normal;font-style:normal;transform:scaleX(0.8214);">1</div>
<div style="position:absolute;left:1720.4px;top:742.5999999999999px;width:84.69999999999982px;height:21px;background:#e4eff0;border:1px solid #cfdadd;box-sizing:border-box;border-radius:3.5px"></div>
<div class="t" style="left:1725.45px;top:745.18px;font-size:15.5px;line-height:15.5px;color:#3f4550;font-weight:normal;font-style:normal;transform:scaleX(0.9242);">index_node</div>
<div class="t" style="left:1810.74px;top:745.18px;font-size:15.5px;line-height:15.5px;color:#3f4550;font-weight:normal;font-style:normal;transform:scaleX(0.9629);">protegrit</div>
<div class="t" style="left:828.87px;top:770.98px;font-size:15.5px;line-height:15.5px;color:#3f4550;font-weight:normal;font-style:normal;transform:scaleX(0.8757);">y-esa859/10.37.4.69</div>
<div style="position:absolute;left:957.4px;top:768.3999999999999px;width:76.00000000000011px;height:21px;background:#e4eff0;border:1px solid #cfdadd;box-sizing:border-box;border-radius:3.5px"></div>
<div class="t" style="left:963.18px;top:770.98px;font-size:15.5px;line-height:15.5px;color:#3f4550;font-weight:normal;font-style:normal;transform:scaleX(0.9321);">tiebreaker</div>
<div class="t" style="left:1038.22px;top:770.98px;font-size:15.5px;line-height:15.5px;color:#3f4550;font-weight:normal;font-style:normal;transform:scaleX(0.8720);">20,185</div>
<div style="position:absolute;left:1085.2px;top:768.3999999999999px;width:58.200000000000045px;height:21px;background:#e4eff0;border:1px solid #cfdadd;box-sizing:border-box;border-radius:3.5px"></div>
<div class="t" style="left:1090.21px;top:770.98px;font-size:15.5px;line-height:15.5px;color:#3f4550;font-weight:normal;font-style:normal;transform:scaleX(0.9533);">logtype</div>
<div class="t" style="left:1148.42px;top:770.98px;font-size:15.5px;line-height:15.5px;color:#3f4550;font-weight:normal;font-style:normal;transform:scaleX(0.9270);">Kernel</div>
<div style="position:absolute;left:1195.7px;top:768.3999999999999px;width:158.79999999999995px;height:21px;background:#e4eff0;border:1px solid #cfdadd;box-sizing:border-box;border-radius:3.5px"></div>
<div class="t" style="left:1201.08px;top:770.98px;font-size:15.5px;line-height:15.5px;color:#3f4550;font-weight:normal;font-style:normal;transform:scaleX(0.9533);">additional_info.module</div>
<div class="t" style="left:1359.40px;top:770.98px;font-size:15.5px;line-height:15.5px;color:#3f4550;font-weight:normal;font-style:normal;transform:scaleX(0.9036);">pid=2580</div>
<div style="position:absolute;left:1422.6px;top:768.3999999999999px;width:181.70000000000005px;height:21px;background:#e4eff0;border:1px solid #cfdadd;box-sizing:border-box;border-radius:3.5px"></div>
<div class="t" style="left:1427.98px;top:770.98px;font-size:15.5px;line-height:15.5px;color:#3f4550;font-weight:normal;font-style:normal;transform:scaleX(0.9545);">additional_info.description</div>
<div class="t" style="left:1610.03px;top:770.98px;font-size:15.5px;line-height:15.5px;color:#3f4550;font-weight:normal;font-style:normal;transform:scaleX(0.8683);">auid=4294967295 ses=4294967295 subj=</div>
<div class="t" style="left:828.22px;top:796.78px;font-size:15.5px;line-height:15.5px;color:#3f4550;font-weight:normal;font-style:normal;transform:scaleX(0.9080);">=unconfined msg=&#x27;op=PAM:setcred grantors=pam_rootok acct=&quot;rabbitmq&quot; exe=&quot;/sbin/runuser&quot; hostname=? addr=? terminal=? res=success&#x27;</div>
<div style="position:absolute;left:1703.3px;top:798.9px;width:8.299999999999955px;height:11px;border:1.1px solid #4a4f59;box-sizing:border-box"></div>
<svg style="position:absolute;left:1703.3px;top:798.9px" width="8.299999999999955" height="11" viewBox="0 0 8.299999999999955 11"><path d="M1 1L7.2999999999999545 10M7.2999999999999545 1L1 10" stroke="#4a4f59" stroke-width="0.8"/></svg>
<div class="t" style="left:1711.48px;top:796.78px;font-size:15.5px;line-height:15.5px;color:#3f4550;font-weight:normal;font-style:normal;transform:scaleX(0.9408);">UID=&quot;root&quot; AUID=&quot;un…</div>
<svg style="position:absolute;left:535px;top:837.6px" width="22" height="22" viewBox="0 0 22 22"><path d="M3 17.5H1.8C1.2 17.5 0.8 17.1 0.8 16.5V1.8C0.8 1.2 1.2 0.8 1.8 0.8H15.3C15.9 0.8 16.3 1.2 16.3 1.8V3.5" fill="none" stroke="#0b7a75" stroke-width="1.3"/><circle cx="10.9" cy="11" r="5.5" fill="none" stroke="#0b7a75" stroke-width="1.4"/><path d="M14.9 15L18.9 19" stroke="#0b7a75" stroke-width="1.4"/><rect x="2.5" y="2.6" width="1" height="1" fill="#0b7a75"/><rect x="5.0" y="2.6" width="1" height="1" fill="#0b7a75"/><rect x="7.5" y="2.6" width="1" height="1" fill="#0b7a75"/><rect x="10.0" y="2.6" width="1" height="1" fill="#0b7a75"/><rect x="12.5" y="2.6" width="1" height="1" fill="#0b7a75"/><rect x="2.5" y="5.0" width="1" height="1" fill="#0b7a75"/><rect x="2.5" y="7.5" width="1" height="1" fill="#0b7a75"/><rect x="2.5" y="10.0" width="1" height="1" fill="#0b7a75"/><rect x="2.5" y="12.5" width="1" height="1" fill="#0b7a75"/><rect x="5" y="5" width="1" height="1" fill="#0b7a75"/></svg>
<div class="t" style="left:578.14px;top:838.26px;font-size:16px;line-height:16px;color:#343741;font-weight:normal;font-style:normal;transform:scaleX(0.9572);">Feb 29, 2024 @ 09:43:50.170</div>
<div style="position:absolute;left:829.3px;top:836.1999999999999px;width:98.30000000000007px;height:21px;background:#e4eff0;border:1px solid #cfdadd;box-sizing:border-box;border-radius:3.5px"></div>
<div class="t" style="left:834.41px;top:838.78px;font-size:15.5px;line-height:15.5px;color:#3f4550;font-weight:normal;font-style:normal;transform:scaleX(0.8999);">process.name</div>
<div class="t" style="left:932.75px;top:838.78px;font-size:15.5px;line-height:15.5px;color:#3f4550;font-weight:normal;font-style:normal;transform:scaleX(0.7979);">USER_START</div>
<div style="position:absolute;left:1019.4px;top:836.1999999999999px;width:106.89999999999998px;height:21px;background:#e4eff0;border:1px solid #cfdadd;box-sizing:border-box;border-radius:3.5px"></div>
<div class="t" style="left:1024.78px;top:838.78px;font-size:15.5px;line-height:15.5px;color:#3f4550;font-weight:normal;font-style:normal;transform:scaleX(0.9494);">origin.time_utc</div>
<div class="t" style="left:1131.43px;top:838.78px;font-size:15.5px;line-height:15.5px;color:#3f4550;font-weight:normal;font-style:normal;transform:scaleX(0.8452);">Feb 29, 2024 @ 09:43:50.170</div>
<div style="position:absolute;left:1311.5px;top:836.1999999999999px;width:113.59999999999991px;height:21px;background:#e4eff0;border:1px solid #cfdadd;box-sizing:border-box;border-radius:3.5px"></div>
<div class="t" style="left:1316.89px;top:838.78px;font-size:15.5px;line-height:15.5px;color:#3f4550;font-weight:normal;font-style:normal;transform:scaleX(0.9307);">origin.hostname</div>
<div class="t" style="left:1430.99px;top:838.78px;font-size:15.5px;line-height:15.5px;color:#3f4550;font-weight:normal;font-style:normal;transform:scaleX(0.9151);">protegrity-esa859</div>
<div style="position:absolute;left:1546.5px;top:836.1999999999999px;width:63.90000000000009px;height:21px;background:#e4eff0;border:1px solid #cfdadd;box-sizing:border-box;border-radius:3.5px"></div>
<div class="t" style="left:1551.86px;top:838.78px;font-size:15.5px;line-height:15.5px;color:#3f4550;font-weight:normal;font-style:normal;transform:scaleX(0.9756);">origin.ip</div>
<div class="t" style="left:1615.58px;top:838.78px;font-size:15.5px;line-height:15.5px;color:#3f4550;font-weight:normal;font-style:normal;transform:scaleX(0.8676);">10.37.4.69</div>
<div style="position:absolute;left:1684.5px;top:836.1999999999999px;width:30.90000000000009px;height:21px;background:#e4eff0;border:1px solid #cfdadd;box-sizing:border-box;border-radius:3.5px"></div>
<div class="t" style="left:1689.89px;top:838.78px;font-size:15.5px;line-height:15.5px;color:#3f4550;font-weight:normal;font-style:normal;transform:scaleX(0.9389);">cnt</div>
<div class="t" style="left:1721.18px;top:838.78px;font-size:15.5px;line-height:15.5px;color:#3f4550;font-weight:normal;font-style:normal;transform:scaleX(0.8662);">1</div>
<div style="position:absolute;left:1734.3px;top:836.1999999999999px;width:84.90000000000009px;height:21px;background:#e4eff0;border:1px solid #cfdadd;box-sizing:border-box;border-radius:3.5px"></div>
<div class="t" style="left:1739.35px;top:838.78px;font-size:15.5px;line-height:15.5px;color:#3f4550;font-weight:normal;font-style:normal;transform:scaleX(0.9268);">index_node</div>
<div class="t" style="left:1823.75px;top:838.78px;font-size:15.5px;line-height:15.5px;color:#3f4550;font-weight:normal;font-style:normal;transform:scaleX(0.9605);">proteg</div>
<div class="t" style="left:827.98px;top:864.58px;font-size:15.5px;line-height:15.5px;color:#3f4550;font-weight:normal;font-style:normal;transform:scaleX(0.8991);">rity-esa859/10.37.4.69</div>
<div style="position:absolute;left:971.3px;top:861.9999999999999px;width:76.0px;height:21px;background:#e4eff0;border:1px solid #cfdadd;box-sizing:border-box;border-radius:3.5px"></div>
<div class="t" style="left:977.08px;top:864.58px;font-size:15.5px;line-height:15.5px;color:#3f4550;font-weight:normal;font-style:normal;transform:scaleX(0.9321);">tiebreaker</div>
<div class="t" style="left:1052.33px;top:864.58px;font-size:15.5px;line-height:15.5px;color:#3f4550;font-weight:normal;font-style:normal;transform:scaleX(0.8704);">20,186</div>
<div style="position:absolute;left:1099.3px;top:861.9999999999999px;width:57.90000000000009px;height:21px;background:#e4eff0;border:1px solid #cfdadd;box-sizing:border-box;border-radius:3.5px"></div>
<div class="t" style="left:1104.32px;top:864.58px;font-size:15.5px;line-height:15.5px;color:#3f4550;font-weight:normal;font-style:normal;transform:scaleX(0.9471);">logtype</div>
<div class="t" style="left:1162.73px;top:864.58px;font-size:15.5px;line-height:15.5px;color:#3f4550;font-weight:normal;font-style:normal;transform:scaleX(0.9200);">Kernel</div>
<div style="position:absolute;left:1209.3px;top:861.9999999999999px;width:159.20000000000005px;height:21px;background:#e4eff0;border:1px solid #cfdadd;box-sizing:border-box;border-radius:3.5px"></div>
<div class="t" style="left:1214.68px;top:864.58px;font-size:15.5px;line-height:15.5px;color:#3f4550;font-weight:normal;font-style:normal;transform:scaleX(0.9559);">additional_info.module</div>
<div class="t" style="left:1373.40px;top:864.58px;font-size:15.5px;line-height:15.5px;color:#3f4550;font-weight:normal;font-style:normal;transform:scaleX(0.9036);">pid=2580</div>
<div style="position:absolute;left:1436.9px;top:861.9999999999999px;width:181.19999999999982px;height:21px;background:#e4eff0;border:1px solid #cfdadd;box-sizing:border-box;border-radius:3.5px"></div>
<div class="t" style="left:1442.28px;top:864.58px;font-size:15.5px;line-height:15.5px;color:#3f4550;font-weight:normal;font-style:normal;transform:scaleX(0.9517);">additional_info.description</div>
<div class="t" style="left:1623.84px;top:864.58px;font-size:15.5px;line-height:15.5px;color:#3f4550;font-weight:normal;font-style:normal;transform:scaleX(0.8662);">auid=4294967295 ses=4294967295 sub</div>
<div class="t" style="left:829.25px;top:890.38px;font-size:15.5px;line-height:15.5px;color:#3f4550;font-weight:normal;font-style:normal;transform:scaleX(0.9087);">j==unconfined msg=&#x27;op=PAM:session_open grantors=pam_keyinit,pam_limits acct=&quot;rabbitmq&quot; exe=&quot;/sbin/runuser&quot; hostname=? addr=? terminal=? res=success&#x27;</div>
<div style="position:absolute;left:1829px;top:892.5px;width:8.299999999999955px;height:11px;border:1.1px solid #4a4f59;box-sizing:border-box"></div>
<svg style="position:absolute;left:1829px;top:892.5px" width="8.299999999999955" height="11" viewBox="0 0 8.299999999999955 11"><path d="M1 1L7.2999999999999545 10M7.2999999999999545 1L1 10" stroke="#4a4f59" stroke-width="0.8"/></svg>
<div class="t" style="left:1837.21px;top:890.38px;font-size:15.5px;line-height:15.5px;color:#3f4550;font-weight:normal;font-style:normal;transform:scaleX(1.0767);">U…</div>
<svg style="position:absolute;left:535px;top:931.2px" width="22" height="22" viewBox="0 0 22 22"><path d="M3 17.5H1.8C1.2 17.5 0.8 17.1 0.8 16.5V1.8C0.8 1.2 1.2 0.8 1.8 0.8H15.3C15.9 0.8 16.3 1.2 16.3 1.8V3.5" fill="none" stroke="#0b7a75" stroke-width="1.3"/><circle cx="10.9" cy="11" r="5.5" fill="none" stroke="#0b7a75" stroke-width="1.4"/><path d="M14.9 15L18.9 19" stroke="#0b7a75" stroke-width="1.4"/><rect x="2.5" y="2.6" width="1" height="1" fill="#0b7a75"/><rect x="5.0" y="2.6" width="1" height="1" fill="#0b7a75"/><rect x="7.5" y="2.6" width="1" height="1" fill="#0b7a75"/><rect x="10.0" y="2.6" width="1" height="1" fill="#0b7a75"/><rect x="12.5" y="2.6" width="1" height="1" fill="#0b7a75"/><rect x="2.5" y="5.0" width="1" height="1" fill="#0b7a75"/><rect x="2.5" y="7.5" width="1" height="1" fill="#0b7a75"/><rect x="2.5" y="10.0" width="1" height="1" fill="#0b7a75"/><rect x="2.5" y="12.5" width="1" height="1" fill="#0b7a75"/><rect x="5" y="5" width="1" height="1" fill="#0b7a75"/></svg>
<div class="t" style="left:578.14px;top:931.86px;font-size:16px;line-height:16px;color:#343741;font-weight:normal;font-style:normal;transform:scaleX(0.9572);">Feb 29, 2024 @ 09:43:51.390</div>
<div style="position:absolute;left:829.3px;top:929.8px;width:98.30000000000007px;height:21px;background:#e4eff0;border:1px solid #cfdadd;box-sizing:border-box;border-radius:3.5px"></div>
<div class="t" style="left:834.41px;top:932.38px;font-size:15.5px;line-height:15.5px;color:#3f4550;font-weight:normal;font-style:normal;transform:scaleX(0.8999);">process.name</div>
<div class="t" style="left:932.63px;top:932.38px;font-size:15.5px;line-height:15.5px;color:#3f4550;font-weight:normal;font-style:normal;transform:scaleX(0.8098);">USER_END</div>
<div style="position:absolute;left:1006.4px;top:929.8px;width:106.89999999999998px;height:21px;background:#e4eff0;border:1px solid #cfdadd;box-sizing:border-box;border-radius:3.5px"></div>
<div class="t" style="left:1011.78px;top:932.38px;font-size:15.5px;line-height:15.5px;color:#3f4550;font-weight:normal;font-style:normal;transform:scaleX(0.9494);">origin.time_utc</div>
<div class="t" style="left:1118.22px;top:932.38px;font-size:15.5px;line-height:15.5px;color:#3f4550;font-weight:normal;font-style:normal;transform:scaleX(0.8466);">Feb 29, 2024 @ 09:43:51.390</div>
<div style="position:absolute;left:1298.5px;top:929.8px;width:114.0px;height:21px;background:#e4eff0;border:1px solid #cfdadd;box-sizing:border-box;border-radius:3.5px"></div>
<div class="t" style="left:1303.89px;top:932.38px;font-size:15.5px;line-height:15.5px;color:#3f4550;font-weight:normal;font-style:normal;transform:scaleX(0.9344);">origin.hostname</div>
<div class="t" style="left:1417.89px;top:932.38px;font-size:15.5px;line-height:15.5px;color:#3f4550;font-weight:normal;font-style:normal;transform:scaleX(0.9159);">protegrity-esa859</div>
<div style="position:absolute;left:1534.7px;top:929.8px;width:62.299999999999955px;height:21px;background:#e4eff0;border:1px solid #cfdadd;box-sizing:border-box;border-radius:3.5px"></div>
<div class="t" style="left:1540.08px;top:932.38px;font-size:15.5px;line-height:15.5px;color:#3f4550;font-weight:normal;font-style:normal;transform:scaleX(0.9454);">origin.ip</div>
<div class="t" style="left:1601.97px;top:932.38px;font-size:15.5px;line-height:15.5px;color:#3f4550;font-weight:normal;font-style:normal;transform:scaleX(0.8704);">10.37.4.69</div>
<div style="position:absolute;left:1672px;top:929.8px;width:30.40000000000009px;height:21px;background:#e4eff0;border:1px solid #cfdadd;box-sizing:border-box;border-radius:3.5px"></div>
<div class="t" style="left:1677.41px;top:932.38px;font-size:15.5px;line-height:15.5px;color:#3f4550;font-weight:normal;font-style:normal;transform:scaleX(0.9138);">cnt</div>
<div class="t" style="left:1707.63px;top:932.38px;font-size:15.5px;line-height:15.5px;color:#3f4550;font-weight:normal;font-style:normal;transform:scaleX(0.8214);">1</div>
<div style="position:absolute;left:1721.6px;top:929.8px;width:84.40000000000009px;height:21px;background:#e4eff0;border:1px solid #cfdadd;box-sizing:border-box;border-radius:3.5px"></div>
<div class="t" style="left:1726.66px;top:932.38px;font-size:15.5px;line-height:15.5px;color:#3f4550;font-weight:normal;font-style:normal;transform:scaleX(0.9204);">index_node</div>
<div class="t" style="left:1810.74px;top:932.38px;font-size:15.5px;line-height:15.5px;color:#3f4550;font-weight:normal;font-style:normal;transform:scaleX(0.9629);">protegrit</div>
<div style="position:absolute;left:0px;top:936.8px;width:497px;height:1.2px;background:#d6d9dd"></div>
</body></html>
